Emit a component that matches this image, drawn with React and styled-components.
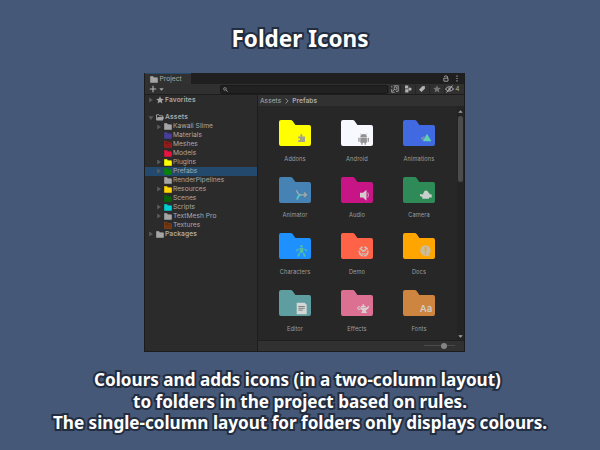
import React from "react";
import styled, { createGlobalStyle } from "styled-components";

const GlobalStyle = createGlobalStyle`
  * { box-sizing: border-box; }
  body { margin: 0; background: #465877; }
`;

const Page = styled.main`
  width: 600px;
  height: 450px;
  overflow: hidden;
  background: #465877;
  display: flex;
  flex-direction: column;
  align-items: center;
  font-family: "Noto Sans", "Open Sans", sans-serif;
`;

const outline = `
  color: #fff;
  font-weight: 700;
  paint-order: stroke fill;
  -webkit-text-stroke: 4px #222d40;
  stroke-linejoin: round;
  white-space: nowrap;
`;

const Title = styled.h1`
  ${outline}
  margin: 22px 0 0;
  height: 51px;
  font-size: 22.5px;
  line-height: 33px;
`;

const Caption = styled.div`
  display: flex;
  flex-direction: column;
  align-items: center;
  margin-top: 17px;
`;

const CaptionLine = styled.p`
  ${outline}
  margin: 0;
  margin-left: ${(p) => p.$shift || 0}px;
  font-size: 17.1px;
  line-height: 21.5px;
`;

const Window = styled.section`
  width: 321px;
  height: 279px;
  flex: none;
  margin-left: 9px;
  border: 1px solid #1c1c1c;
  border-top: 0;
  background: #282828;
  color: #a9a9a9;
  font-family: Inter, "Liberation Sans", sans-serif;
  font-size: 6.7px;
  display: flex;
  flex-direction: column;
`;

const TabBar = styled.header`
  height: 11px;
  flex: none;
  background: #1f1f1f;
  display: flex;
  justify-content: space-between;
`;

const Tab = styled.div`
  width: 46px;
  padding-left: 5px;
  background: #313131;
  border-top: 1px solid #264a6b;
  display: flex;
  align-items: center;
  gap: 1.5px;
`;

const TabActions = styled.div`
  display: flex;
  align-items: center;
  gap: 7px;
  padding-right: 6px;
`;

const Toolbar = styled.div`
  height: 11px;
  flex: none;
  background: #303030;
  border-bottom: 1px solid #1d1d1d;
  display: flex;
  align-items: center;
  padding: 0 2px 0 4px;
`;

const AddButton = styled.div`
  width: 71px;
  display: flex;
  align-items: center;
  gap: 2px;
`;

const Search = styled.div`
  width: 168px;
  height: 9px;
  border: 1px solid #191919;
  border-radius: 2px;
  background: #212121;
  display: flex;
  align-items: center;
  padding-left: 2px;
`;

const ToolCell = styled.div`
  width: ${(p) => p.$w || 14.5}px;
  height: 9px;
  border-left: 1px solid #262626;
  display: flex;
  align-items: center;
  justify-content: center;
  gap: ${(p) => p.$gap || 0}px;
`;

const Body = styled.div`
  flex: 1;
  min-height: 0;
  display: flex;
`;

const Tree = styled.nav`
  width: 113px;
  flex: none;
  border-right: 1px solid #1d1d1d;
  background: #2b2b2b;
  padding-top: 1px;
`;

const TreeRow = styled.div`
  height: 8.96px;
  display: flex;
  align-items: center;
  padding-left: ${(p) => 3 + p.$depth * 8}px;
  margin-top: ${(p) => p.$gap || 0}px;
  background: ${(p) => (p.$selected ? "#234a6c" : "transparent")};
  font-weight: ${(p) => (p.$bold ? 600 : 400)};
  white-space: nowrap;
`;

const TreeText = styled.span`
  margin-left: 1.5px;
  line-height: 9px;
  letter-spacing: ${(p) => p.$track || 0}px;
`;

const Slot = styled.span`
  width: ${(p) => p.$w}px;
  flex: none;
  display: flex;
  align-items: center;
`;

const Content = styled.div`
  flex: 1;
  display: flex;
  flex-direction: column;
`;

const Breadcrumb = styled.div`
  height: 11px;
  flex: none;
  padding-left: 2px;
  background: #313131;
  display: flex;
  align-items: center;
  gap: 3.5px;
`;

const Crumb = styled.span`
  font-weight: ${(p) => (p.$current ? 600 : 400)};
`;

const Browser = styled.div`
  flex: 1;
  min-height: 0;
  display: flex;
  justify-content: space-between;
  background: #272727;
`;

const Grid = styled.div`
  display: grid;
  grid-template-columns: repeat(3, 62px);
  grid-auto-rows: 56.7px;
  padding: 14px 0 0 6px;
`;

const Tile = styled.figure`
  margin: 0;
  display: flex;
  flex-direction: column;
  align-items: center;
`;

const TileLabel = styled.figcaption`
  margin-top: 7.8px;
  font-size: 5.7px;
  line-height: 9px;
  letter-spacing: 0.1px;
  color: #9e9e9e;
`;

const ScrollTrack = styled.div`
  width: 7px;
  background: #242424;
  display: flex;
  flex-direction: column;
  align-items: center;
  padding: 4px 0 2px;
`;

const ScrollThumb = styled.div`
  width: 5px;
  height: 66px;
  margin: 3px 0 auto;
  border-radius: 3px;
  background: #4c4c4c;
`;

const Footer = styled.footer`
  height: 11.5px;
  flex: none;
  border-top: 1px solid #1f1f1f;
  background: #313131;
  display: flex;
  align-items: center;
  justify-content: flex-end;
  padding-right: 9px;
`;

const Slider = styled.div`
  width: 31px;
  height: 1px;
  background: #4b4b4b;
  display: flex;
  align-items: center;
  padding-left: 17px;
`;

const Knob = styled.div`
  width: 6px;
  height: 6px;
  flex: none;
  border-radius: 50%;
  background: #858585;
`;

const Arrow = ({ open }) => (
  <svg width="6" height="6" viewBox="0 0 6 6">
    <path d={open ? "M.5 1.2h5L3 5z" : "M1.2.6v4.8L5 3z"} fill="#5b5b5b" />
  </svg>
);

const MiniFolder = ({ color = "#a5a5a5", line }) => (
  <svg width="8" height="7" viewBox="0 0 8 7">
    <path
      d="M.4.5h2.6l1.1 1.2h3q.5 0 .5.5v3.9q0 .5-.5.5H.9q-.5 0-.5-.5z"
      fill={color}
      stroke={line || color}
      strokeWidth=".6"
    />
    {line && <path d="M1 3h6v2.8H1z" fill={line} opacity=".3" />}
  </svg>
);

const OpenFolder = () => (
  <svg width="8" height="7" viewBox="0 0 8 7">
    <path d="M.5 6V.8h2.4l.9 1h3v1.3" fill="none" stroke="#a5a5a5" strokeWidth=".9" />
    <path d="M1.700 3h6.3L6.900 6.500H.3z" fill="#a5a5a5" />
  </svg>
);

const Star = ({ color = "#a5a5a5" }) => (
  <svg width="8" height="8" viewBox="0 0 8 8">
    <path d="M4 .2l1.1 2.500 2.700.3-2 1.800.6 2.700L4 6.100 1.600 7.500l.6-2.700-2-1.800 2.700-.3z" fill={color} />
  </svg>
);

const gray = "#b2b2b2";
const glyphs = {
  puzzle: (
    <path d="M19.200 16.500H21.700Q21 15.500 21.400 14.500Q22.300 13.300 23.300 14.500Q23.700 15.500 23 16.500H26V22H19.200V20.300Q21.200 20.600 21.200 19.300Q21 18 19.200 18.400Z" fill="#a3a38c" />
  ),
  android: (
    <g fill="#929292">
      <path d="M19.300 17.200a3.300 3.300 0 016.600 0zM19.300 17.700h6.600V22.700h-1v2h-1.300v-2h-2v2h-1.300v-2h-1zM17.300 17.700h1.300v4h-1.300zM26.600 17.700h1.300v4h-1.300z" />
      <path d="M20.400 14.800l-1-1.300M24.800 14.800l1-1.300" stroke="#929292" strokeWidth=".6" />
    </g>
  ),
  animation: (
    <g>
      <path d="M18 17.500l3.500-1.500v4.500l-3.500-1z" fill="#7688b0" />
      <path d="M24 13.700l4.400 7.500h-8.600z" fill="#60d0b4" />
    </g>
  ),
  animator: (
    <g fill="none" strokeWidth="1.200">
      <path d="M17.500 13.300q1.500 4.500 4 4.500H27M25 15.500l2.500 2.300-2.500 2.300" stroke="#a9a9a9" />
      <path d="M18.200 22.700q.4-4 3.200-4.900" stroke="#58c9bc" strokeWidth="1.700" />
    </g>
  ),
  audio: (
    <g>
      <path d="M19 15.700h3l3.500-3v11L22 20.500h-3z" fill="#d5ccd1" />
      <path d="M26.800 15.500q1.200 2.500 0 5" stroke="#d5ccd1" fill="none" strokeWidth=".8" />
    </g>
  ),
  camera: (
    <path d="M17 17l3.200.5q-.6-1.200.6-2 .2-2 2.200-2 2 0 2.200 2 1.600.3 1.300 1.800l2.200.3v3h-2.700v1.200H19.300V19.900l-2.300-1z" fill="#cbd0cc" />
  ),
  character: (
    <g fill="#55bda4">
      <circle cx="22.500" cy="13.200" r="1.200" />
      <path d="M20.500 15h4l-.3 5h-3.400zM19.800 15.200l-.5 2-2.400 1.200-.3-1.200zM25.200 15.200l.5 2 2.400 1.200.3-1.200zM19.900 19.800l1.400 1-1.300 2.800h-2.100zM25.100 19.800l-1.400 1 1.300 2.800h2.100z" />
    </g>
  ),
  demo: (
    <g fill="none" stroke="#d4bdb6" strokeWidth="1.700">
      <path d="M18.500 16.300l3-2.500M23.500 13.800l3.200 2.400M18.200 17.600l.7 3.500 3 2M27 17.500l-.7 3.600-3 2.200M20 16.300l2.500 2 2.600-2" />
      <path d="M20.500 20.200l2 1 2-1" strokeWidth="1.200" />
    </g>
  ),
  docs: (
    <g>
      <path d="M22.500 12.300a5.200 5.200 0 11-.1 10.400 5.200 5.200 0 01.1-10.400zM24.500 20.500l3.300 3-4.500-.5z" fill="#c9bd9f" />
      <path d="M22.500 14v4.600M22.500 19.700v1.400" stroke="#f0a10b" strokeWidth="1.500" />
    </g>
  ),
  editor: (
    <g>
      <path d="M17.700 12.800h8l2 2v9.500h-10z" fill="#d4d7d5" />
      <path d="M19.300 16.500h6.500M19.300 18.300h6.500M19.300 20.100h4.500" stroke="#737978" strokeWidth=".9" />
    </g>
  ),
  effects: (
    <g>
      <path d="M18.800 17.600h6.700l3-2q-.8 4-4 4.800l1.700 2.600h-6l1.400-2.600q-2.500-.5-2.800-2.800zM19.700 16.900q.4-1.200 1.900-1.300v-1.300h1.400v1.300q1.500.2 1.900 1.300z" fill="#d9cfd3" />
      <path d="M19.200 19.500q-2.700.2-2.700-1.500t2.700-1" stroke="#d9cfd3" fill="none" />
    </g>
  ),
};

const GlyphText = styled.text`
  font: 600 9.6px Inter, sans-serif;
  fill: #d2cbc3;
`;

const BigFolder = ({ color, glyph }) => (
  <svg width="32" height="26" viewBox="0 0 32 26">
    <path d="M0 2Q0 0 2 0h9.700q1.200 0 1.900 1l2.800 4H30q2 0 2 2v17q0 2-2 2H2q-2 0-2-2z" fill={color} />
    {glyph === "fonts" ? <GlyphText x="16.800" y="22">Aa</GlyphText> : glyphs[glyph]}
  </svg>
);

const folders = [
  ["Addons", "#ffff00", "puzzle"],
  ["Android", "#f8f8ff", "android"],
  ["Animations", "#4169e1", "animation"],
  ["Animator", "#4682b4", "animator"],
  ["Audio", "#c71585", "audio"],
  ["Camera", "#2e8b57", "camera"],
  ["Characters", "#1e90ff", "character"],
  ["Demo", "#ff6347", "demo"],
  ["Docs", "#ffa500", "docs"],
  ["Editor", "#5f9ea0", "editor"],
  ["Effects", "#db7093", "effects"],
  ["Fonts", "#cd853f", "fonts"],
];

const assets = [
  { name: "Kawaii Slime", arrow: true },
  { name: "Materials", color: "#483d9b" },
  { name: "Meshes", color: "#861313", line: "#b02a24" },
  { name: "Models", color: "#e6143f" },
  { name: "Plugins", color: "#ffff00", arrow: true },
  { name: "Prefabs", color: "#078407", arrow: true, selected: true },
  { name: "RenderPipelines" },
  { name: "Resources", color: "#ffd500", arrow: true },
  { name: "Scenes", color: "#066406" },
  { name: "Scripts", color: "#00ced1", arrow: true },
  { name: "TextMesh Pro", arrow: true },
  { name: "Textures", color: "#642b0b", line: "#95501c" },
];

export default function App() {
  return (
    <>
      <GlobalStyle />
      <Page>
        <Title>Folder Icons</Title>
        <Window>
          <TabBar>
            <Tab><MiniFolder /><span>Project</span></Tab>
            <TabActions>
              <svg width="6" height="7" viewBox="0 0 6 7">
                <path d="M1.500 2V1.300Q3 .2 4.500 1.500V3M.7 3.200h4.300v3H.9z" fill="none" stroke="#a5a5a5" strokeWidth=".9" />
              </svg>
              <svg width="2" height="7" viewBox="0 0 2 7">
                <path d="M.4.5h1.200v1.200H.4zM.4 2.900h1.200v1.200H.4zM.4 5.300h1.200v1.200H.4z" fill="#a5a5a5" />
              </svg>
            </TabActions>
          </TabBar>
          <Toolbar>
            <AddButton>
              <svg width="8" height="8" viewBox="0 0 8 8"><path d="M4 .8v6.400M.8 4h6.400" stroke="#b5b5b5" strokeWidth="1.1" /></svg>
              <svg width="5" height="3" viewBox="0 0 5 3"><path d="M.3.2h4.400L2.500 2.800z" fill="#a5a5a5" /></svg>
            </AddButton>
            <Search>
              <svg width="5" height="5" viewBox="0 0 5 5">
                <circle cx="1.900" cy="1.900" r="1.300" fill="none" stroke="#999" strokeWidth=".8" />
                <path d="M3 3l1.700 1.700" stroke="#999" strokeWidth=".9" />
              </svg>
            </Search>
            <ToolCell $w={12}>
              <svg width="8" height="8" viewBox="0 0 8 8" fill="none" stroke={gray} strokeWidth=".8">
                <path d="M2.500.8H7.200v5.500H5M.7 4v3.200h3M.8 2.500V.8" />
                <circle cx="4.400" cy="3.400" r="1.400" /><path d="M3.400 4.400L1.500 6.300" />
              </svg>
            </ToolCell>
            <ToolCell>
              <svg width="8" height="8" viewBox="0 0 8 8" fill={gray}>
                <path d="M1 .6h3.300v2.900H1zM1.200 4.300h3.300v3.100H1.200z" /><circle cx="6" cy="4.100" r="1.600" />
              </svg>
            </ToolCell>
            <ToolCell>
              <svg width="8" height="8" viewBox="0 0 8 8"><path d="M1 4.800L4.200 1.300 6.700 1l.3 2.400-3.500 3.500z" fill={gray} /></svg>
            </ToolCell>
            <ToolCell><Star color="#747474" /></ToolCell>
            <ToolCell $w={17} $gap={1}>
              <svg width="9" height="8" viewBox="0 0 9 8" fill="none" stroke={gray} strokeWidth="1">
                <path d="M.4 4q3.900-4.600 8.200 0-4.300 4.300-8.200 0zM7.500.5L1.500 7.500" /><circle cx="4.500" cy="4" r=".8" />
              </svg>
              <span>4</span>
            </ToolCell>
          </Toolbar>
          <Body>
            <Tree>
              <TreeRow $depth={0} $bold>
                <Slot $w={7.5}><Arrow /></Slot><Star /><TreeText $track={0.1}>Favorites</TreeText>
              </TreeRow>
              <TreeRow $depth={0} $bold $gap={8.2}>
                <Slot $w={7.5}><Arrow open /></Slot><OpenFolder /><TreeText $track={0.16}>Assets</TreeText>
              </TreeRow>
              {assets.map((a) => (
                <TreeRow key={a.name} $depth={1} $selected={a.selected}>
                  <Slot $w={7.5}>{a.arrow && <Arrow />}</Slot>
                  <MiniFolder color={a.color} line={a.line} />
                  <TreeText>{a.name}</TreeText>
                </TreeRow>
              ))}
              <TreeRow $depth={0} $bold>
                <Slot $w={7.5}><Arrow /></Slot><MiniFolder /><TreeText $track={0.06}>Packages</TreeText>
              </TreeRow>
            </Tree>
            <Content>
              <Breadcrumb>
                <Crumb>Assets</Crumb>
                <svg width="4" height="6" viewBox="0 0 4 6"><path d="M.6.6L3.200 3 .6 5.400" fill="none" stroke="#8c8c8c" /></svg>
                <Crumb $current>Prefabs</Crumb>
              </Breadcrumb>
              <Browser>
                <Grid>
                  {folders.map(([name, color, glyph]) => (
                    <Tile key={name}>
                      <BigFolder color={color} glyph={glyph} />
                      <TileLabel>{name}</TileLabel>
                    </Tile>
                  ))}
                </Grid>
                <ScrollTrack>
                  <svg width="5" height="3" viewBox="0 0 5 3"><path d="M.3 2.800h4.400L2.500.2z" fill="#a5a5a5" /></svg>
                  <ScrollThumb />
                  <svg width="5" height="3" viewBox="0 0 5 3"><path d="M.3.2h4.400L2.500 2.800z" fill="#a5a5a5" /></svg>
                </ScrollTrack>
              </Browser>
              <Footer><Slider><Knob /></Slider></Footer>
            </Content>
          </Body>
        </Window>
        <Caption>
          <CaptionLine $shift={-5}>Colours and adds icons (in a two-column layout)</CaptionLine>
          <CaptionLine>to folders in the project based on rules.</CaptionLine>
          <CaptionLine>The single-column layout for folders only displays colours.</CaptionLine>
        </Caption>
      </Page>
    </>
  );
}
